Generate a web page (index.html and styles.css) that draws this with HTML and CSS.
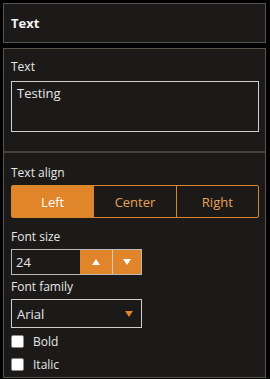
FILE: index.html
```html
<!DOCTYPE html>
<html>
<head>
<meta charset="utf-8">
<link rel="stylesheet" href="styles.css">
</head>
<body>
<div class="panel head">
  <div class="title">Text</div>
</div>
<div class="panel body">
  <div class="section first">
    <div class="label">Text</div>
    <div class="textarea">Testing</div>
  </div>
  <div class="section second">
    <div class="label">Text align</div>
    <div class="seg">
      <div class="segbtn on">Left</div>
      <div class="segbtn">Center</div>
      <div class="segbtn">Right</div>
    </div>
    <div class="label">Font size</div>
    <div class="spin">
      <div class="spinval">24</div>
      <div class="spinbtn"><svg width="8" height="6" viewBox="0 0 8 6"><path d="M0 6 L4 0 L8 6 Z" fill="#fff"/></svg></div>
      <div class="spinbtn last"><svg width="8" height="6" viewBox="0 0 8 6"><path d="M0 0 L8 0 L4 6 Z" fill="#fff"/></svg></div>
    </div>
    <div class="label">Font family</div>
    <div class="select">
      <span>Arial</span>
      <svg width="8" height="6" viewBox="0 0 8 6"><path d="M0 0 L8 0 L4 6 Z" fill="#e0852a"/></svg>
    </div>
    <div class="check"><span class="box"></span><span>Bold</span></div>
    <div class="check"><span class="box"></span><span>Italic</span></div>
  </div>
</div>
</body>
</html>
```
FILE: styles.css
```css
html, body {
  margin: 0;
  padding: 0;
  background: #000;
}
body {
  padding: 3px 4px 0 3px;
  font-family: "Open Sans", "Noto Sans", sans-serif;
  font-size: 12px;
  color: #e6e6e6;
  height: 379px;
  box-sizing: border-box;
  overflow: hidden;
}
.panel {
  background: #1b1a19;
  border: 1px solid #5b544c;
}
.head {
  height: 38px;
  display: flex;
  align-items: center;
  padding-left: 7px;
}
.title {
  font-weight: 700;
  font-size: 13px;
  color: #f2f2f2;
}
.body {
  margin-top: 5px;
  height: 328px;
}
.section {
  padding: 0 6px 0 7px;
}
.first {
  padding-top: 9px;
  padding-bottom: 19px;
  border-bottom: 2px solid #47423d;
}
.second {
  padding-top: 11px;
}
.label {
  height: 18px;
  line-height: 18px;
  margin-bottom: 3px;
}
.first .label { margin-bottom: 5px; }
.textarea {
  height: 51px;
  box-sizing: border-box;
  border: 1px solid #cfcfcf;
  padding: 2px 5px;
  font-size: 13px;
  line-height: 18px;
}
.seg {
  display: flex;
  height: 33px;
  box-sizing: border-box;
  border: 1px solid #d9852f;
  border-radius: 2px;
  margin-bottom: 10px;
}
.segbtn {
  flex: 1;
  display: flex;
  align-items: center;
  justify-content: center;
  color: #eba25a;
  font-size: 13px;
  border-left: 1px solid #d9852f;
}
.segbtn:first-child { border-left: none; }
.segbtn.on {
  background: #e0852a;
  color: #fff;
}
.spin {
  display: flex;
  width: 131px;
  height: 26px;
  box-sizing: border-box;
  border: 1px solid #b9b9b9;
  margin-bottom: 3px;
}
.spinval {
  width: 64px;
  display: flex;
  align-items: center;
  padding-left: 4px;
  font-size: 13px;
}
.spinbtn {
  width: 32px;
  background: #e0852a;
  display: flex;
  align-items: center;
  justify-content: center;
  border-right: 1px solid #d8c8b8;
}
.spinbtn.last { border-right: none; flex: 1; }
.select {
  width: 131px;
  height: 29px;
  box-sizing: border-box;
  border: 1px solid #cfcfcf;
  display: flex;
  align-items: center;
  justify-content: space-between;
  padding: 0 8px 0 5px;
  font-size: 13px;
  margin-top: 2px;
  margin-bottom: 2px;
}
.check {
  display: flex;
  align-items: center;
  gap: 9px;
  height: 23px;
}
.box {
  width: 11px;
  height: 11px;
  background: #fff;
  border: 1px solid #8a8a8a;
  border-radius: 2px;
}
```
